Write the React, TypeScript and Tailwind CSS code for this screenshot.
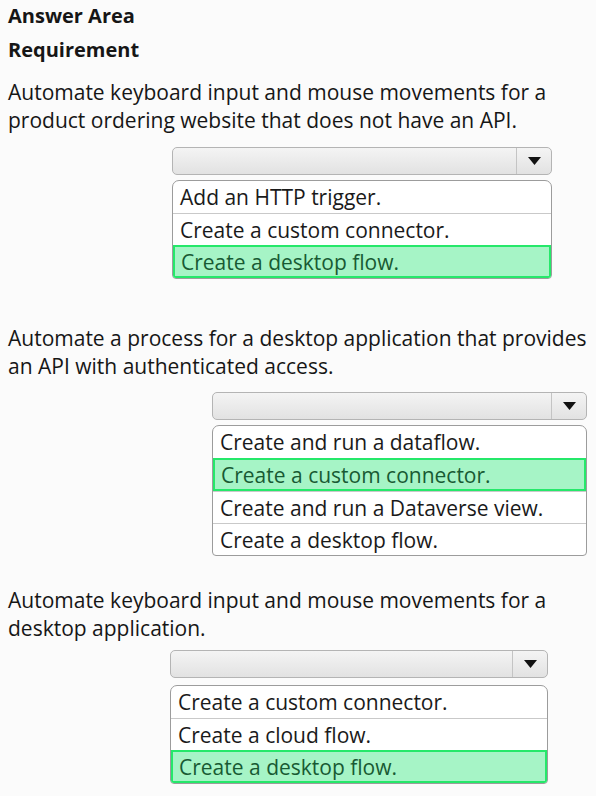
const font = { fontFamily: '"Open Sans", "Noto Sans", sans-serif' };

type Dropdown = {
  left: string;
  width: string;
  options: string[];
  picked: number;
};

function Select({ d, gap }: { d: Dropdown; gap: string }) {
  return (
    <div className={`${d.left} ${d.width}`}>
      {/* closed select box */}
      <div className="flex h-[28px] rounded-[5px] border border-[#b4b4b4] bg-gradient-to-b from-[#f4f4f4] to-[#e2e2e2]">
        <div className="flex-1" />
        <div className="flex w-[35px] items-center justify-center border-l border-[#c4c4c4]">
          <svg width="13" height="8" viewBox="0 0 13 8">
            <path d="M0 0 H13 L6.5 8 Z" fill="#111" />
          </svg>
        </div>
      </div>
      {/* open option list */}
      <div className={`${gap} overflow-hidden rounded-t-[7px] rounded-b-[4px] border border-[#9c9c9c] bg-white`}>
        {d.options.map((o, i) =>
          i === d.picked ? (
            <div
              key={o}
              className="flex h-[33px] items-center border-2 border-[#25e86a] bg-[#a6f4c6] pl-[6px] text-[#185a33]"
            >
              {o}
            </div>
          ) : (
            <div
              key={o}
              className={`flex h-[32px] items-center pl-[7px] text-[#1a1a1a] ${
                i > 0 ? "border-t border-[#c9c9c9]" : ""
              }`}
            >
              {o}
            </div>
          )
        )}
      </div>
    </div>
  );
}

export default function App() {
  return (
    <div
      className="min-h-[796px] w-[596px] bg-[#fbfbfb] px-[8px] text-[21px] leading-[28px] text-[#161616]"
      style={font}
    >
      <div className="pt-[2px] text-[20px] font-bold">Answer Area</div>
      <div className="mt-[6px] text-[20px] font-bold">Requirement</div>

      <p className="mt-[14px]">
        Automate keyboard input and mouse movements for a
        <br />
        product ordering website that does not have an API.
      </p>
      <div className="mt-[13px]">
        <Select
          gap="mt-[5px]"
          d={{
            left: "ml-[164px]",
            width: "w-[380px]",
            options: ["Add an HTTP trigger.", "Create a custom connector.", "Create a desktop flow."],
            picked: 2,
          }}
        />
      </div>

      <p className="mt-[45px]">
        Automate a process for a desktop application that provides
        <br />
        an API with authenticated access.
      </p>
      <div className="mt-[12px]">
        <Select
          gap="mt-[5px]"
          d={{
            left: "ml-[204px]",
            width: "w-[375px]",
            options: [
              "Create and run a  dataflow.",
              "Create a custom connector.",
              "Create and run a Dataverse view.",
              "Create a desktop flow.",
            ],
            picked: 1,
          }}
        />
      </div>

      <p className="mt-[30px]">
        Automate keyboard input and mouse movements for a
        <br />
        desktop application.
      </p>
      <div className="mt-[8px]">
        <Select
          gap="mt-[7px]"
          d={{
            left: "ml-[162px]",
            width: "w-[378px]",
            options: ["Create a custom connector.", "Create a cloud flow.", "Create a desktop flow."],
            picked: 2,
          }}
        />
      </div>
    </div>
  );
}
